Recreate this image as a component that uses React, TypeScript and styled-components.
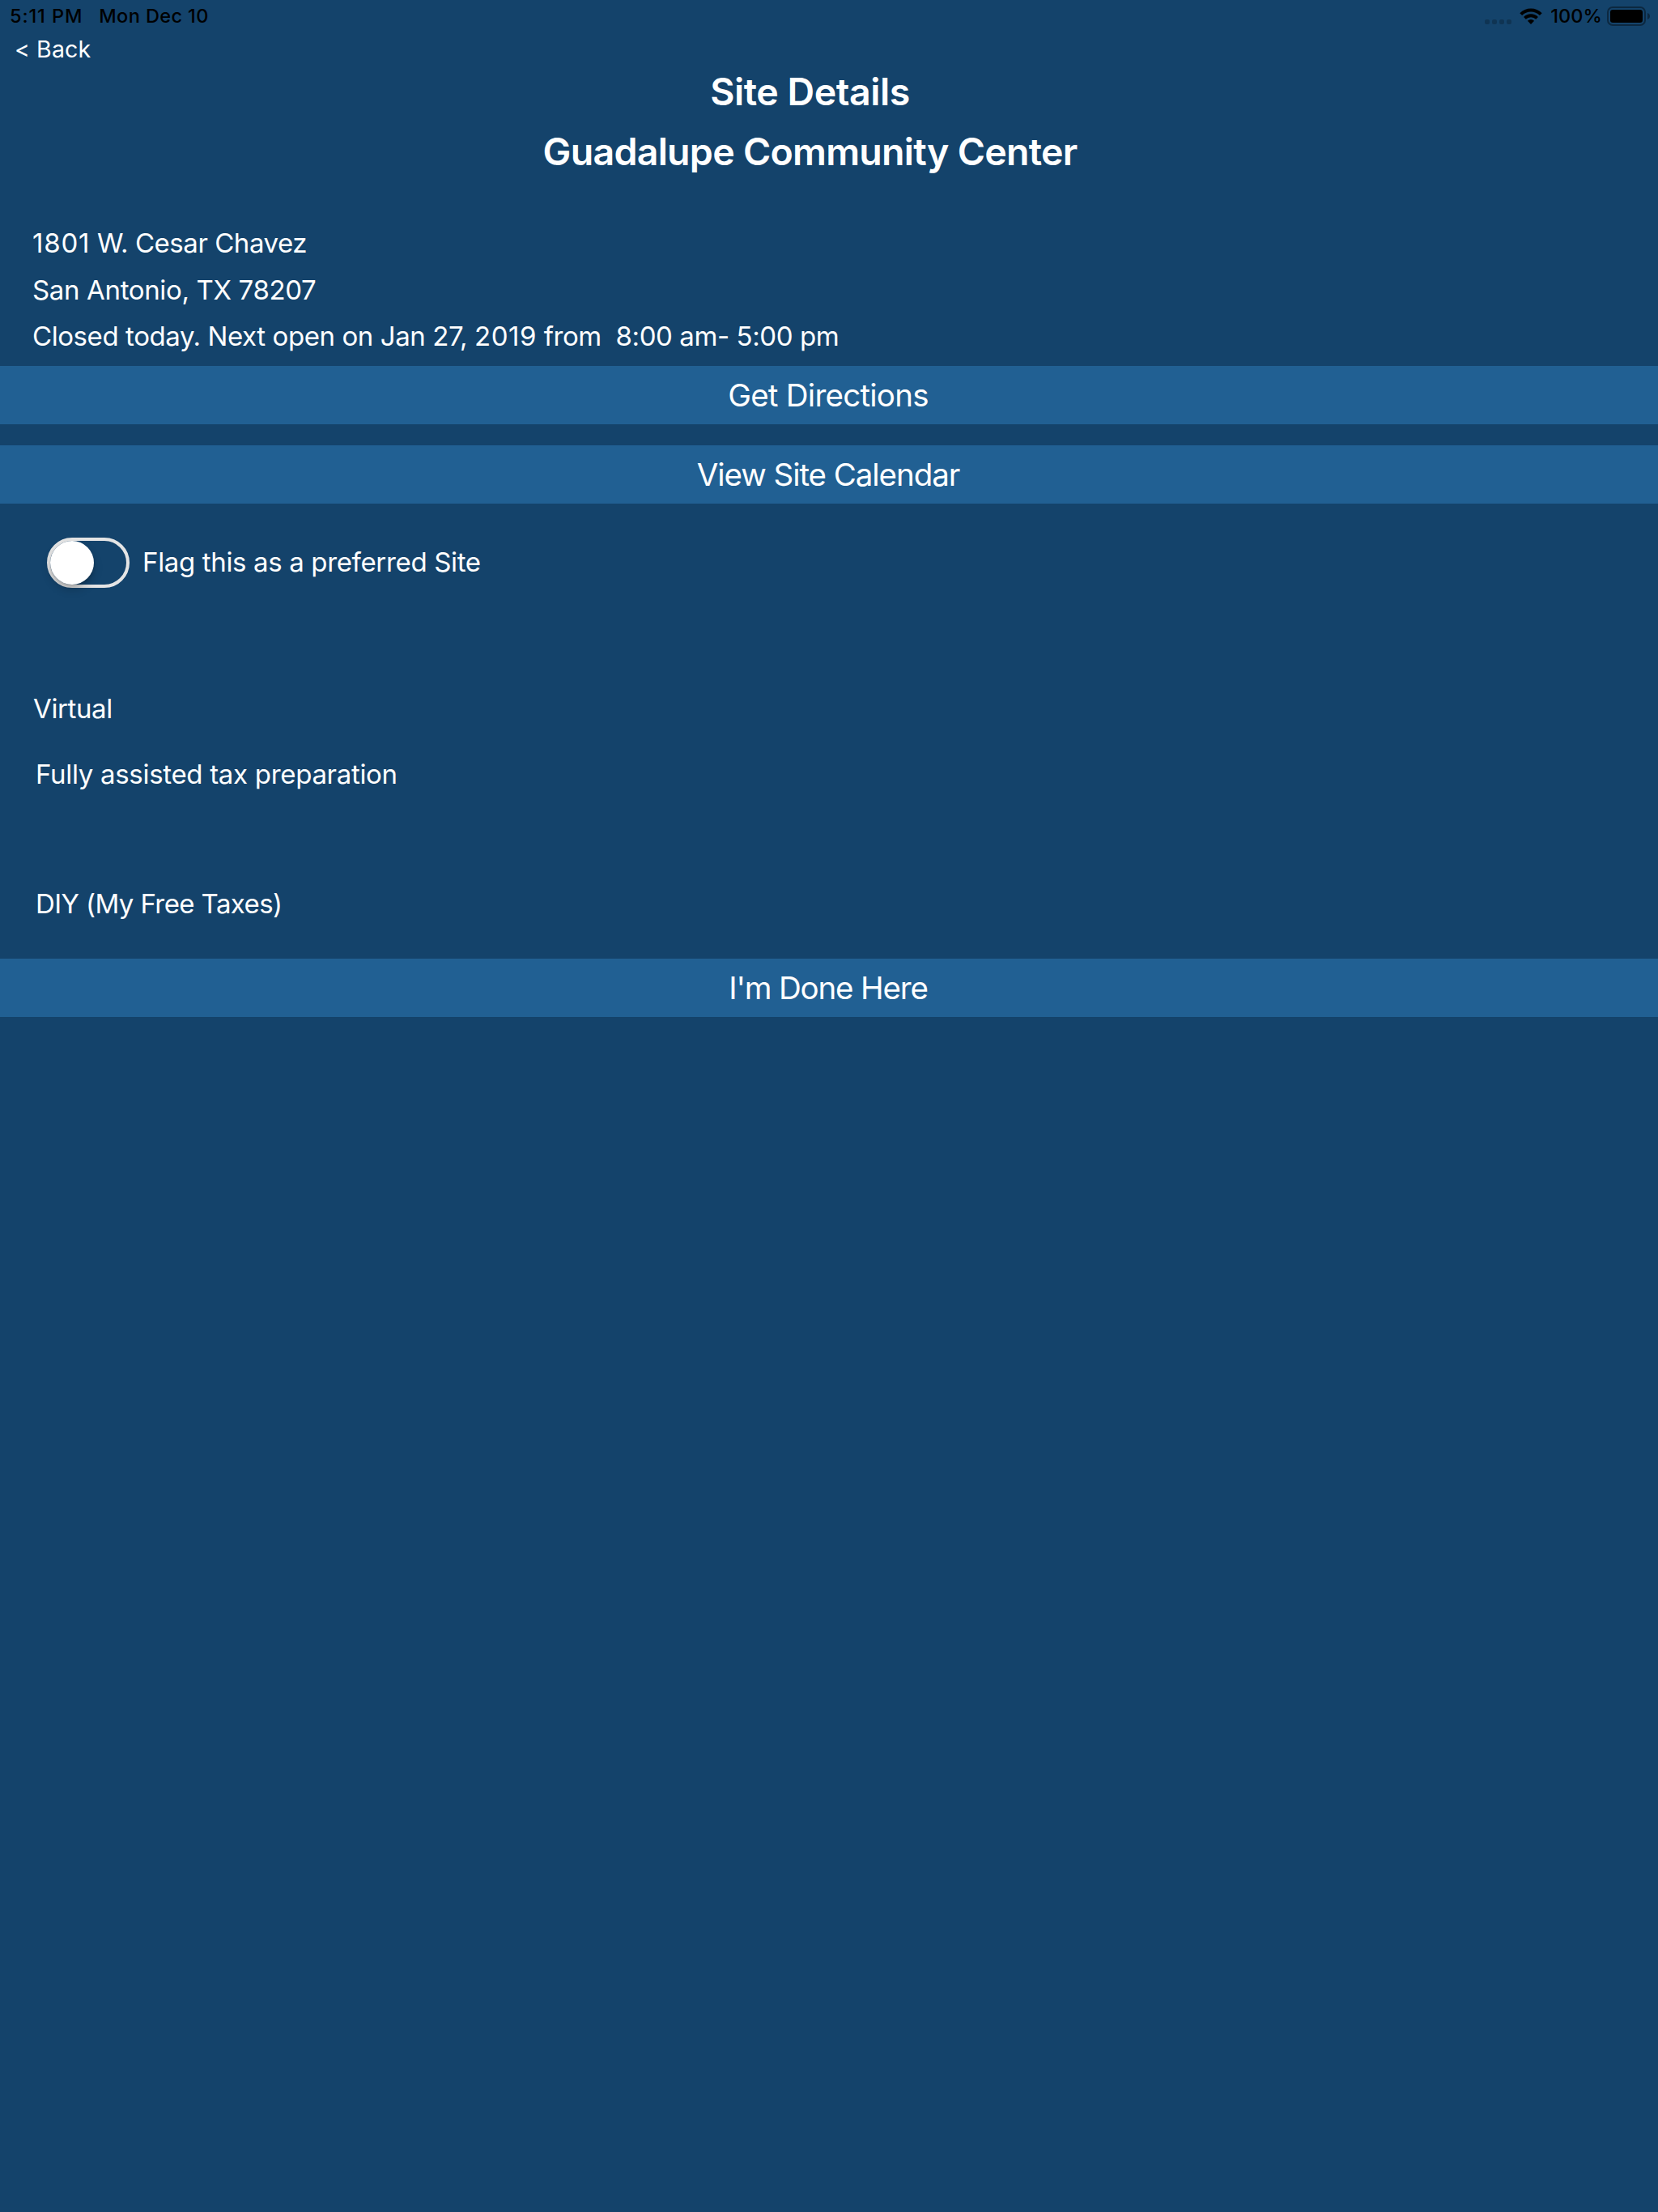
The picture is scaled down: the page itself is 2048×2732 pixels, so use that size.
import React from "react";
import styled, { createGlobalStyle } from "styled-components";

const GlobalStyle = createGlobalStyle`
  body {
    margin: 0;
    background: #14436b;
  }
`;

const Screen = styled.main`
  display: flex;
  flex-direction: column;
  box-sizing: border-box;
  width: 100%;
  min-height: 2732px;
  background: #14436b;
  color: #fff;
  font-family: Inter, "Liberation Sans", sans-serif;
  font-size: 33px;
  white-space: pre;
`;

const StatusBar = styled.header`
  display: flex;
  justify-content: space-between;
  height: 39px;
  padding: 0 10px 0 12px;
  color: #000;
  font-size: 23.5px;
  font-weight: 500;
  line-height: 39px;
`;

const StatusGroup = styled.div<{ $gap?: number }>`
  display: flex;
  gap: ${({ $gap = 0 }) => $gap}px;
`;

const Tracked = styled.span<{ $tracking: number }>`
  letter-spacing: ${({ $tracking }) => $tracking}px;
`;

const SignalDots = styled.div`
  display: flex;
  gap: 3px;
  margin: 24px 10px 0 0;
`;

const SignalDot = styled.i`
  width: 6px;
  height: 6px;
  border-radius: 2px;
  background: rgba(0, 0, 0, 0.22);
`;

const WifiIcon = styled.svg`
  width: 28px;
  height: 20px;
  margin: 10px 10px 0 0;
`;

const BatteryIcon = styled.svg`
  width: 53px;
  height: 24px;
  margin: 8px 0 0 6px;
`;

const BackButton = styled.button`
  align-self: flex-start;
  height: 44px;
  padding: 0 0 0 18px;
  border: 0;
  background: none;
  color: inherit;
  font: 400 28.5px/44px Inter, "Liberation Sans", sans-serif;
  letter-spacing: 0.12px;
`;

const Titles = styled.div`
  display: flex;
  flex-direction: column;
  align-items: center;
  margin-top: -7px;
  padding-right: 47px;
`;

const Title = styled.h1<{ $tracking: number }>`
  margin: 0;
  font-size: 46.5px;
  font-weight: 600;
  line-height: 74px;
  letter-spacing: ${({ $tracking }) => $tracking}px;
`;

const Address = styled.address`
  display: flex;
  flex-direction: column;
  height: 173px;
  margin: 47px 0 8px;
  padding-left: 40px;
  font-style: normal;
`;

const Line = styled.div<{ $tracking: number; $height?: number }>`
  line-height: ${({ $height = 58 }) => $height}px;
  letter-spacing: ${({ $tracking }) => $tracking}px;
`;

const ActionButton = styled.button<{ $tracking: number; $spaceAfter?: number }>`
  width: 100%;
  height: 72px;
  margin: 0 0 ${({ $spaceAfter = 0 }) => $spaceAfter}px;
  padding: 0 2px 0 0;
  border: 0;
  background: #216093;
  color: inherit;
  font: 400 38.5px/72px Inter, "Liberation Sans", sans-serif;
  letter-spacing: ${({ $tracking }) => $tracking}px;
`;

const PreferredRow = styled.label`
  display: flex;
  align-items: center;
  height: 62px;
  margin: 42px 0 120px;
  padding-left: 58px;
  gap: 16px;
`;

const Switch = styled.span`
  display: flex;
  box-sizing: border-box;
  width: 102px;
  height: 62px;
  border: 4px solid #e5e5e5;
  border-radius: 31px;
`;

const Knob = styled.span`
  width: 54px;
  height: 54px;
  border-radius: 50%;
  background: #fff;
  box-shadow: 0 6px 12px rgba(0, 0, 0, 0.2), 0 3px 3px rgba(0, 0, 0, 0.12);
`;

const PreferredLabel = styled.span`
  padding-bottom: 2px;
  line-height: 58px;
  letter-spacing: -0.35px;
`;

const Services = styled.section`
  display: flex;
  flex-direction: column;
  height: 338px;
`;

const Service = styled.div<{ $tracking: number; $indent: number; $spaceAfter?: number }>`
  margin-bottom: ${({ $spaceAfter = 0 }) => $spaceAfter}px;
  padding-left: ${({ $indent }) => $indent}px;
  line-height: 58px;
  letter-spacing: ${({ $tracking }) => $tracking}px;
`;

export default function App() {
  return (
    <>
      <GlobalStyle />
      <Screen>
        <StatusBar>
          <StatusGroup $gap={20}>
            <Tracked $tracking={0.9}>5:11 PM</Tracked>
            <Tracked $tracking={0.4}>Mon Dec 10</Tracked>
          </StatusGroup>
          <StatusGroup>
            <SignalDots>
              <SignalDot />
              <SignalDot />
              <SignalDot />
              <SignalDot />
            </SignalDots>
            <WifiIcon viewBox="0 0 28 20" aria-label="Wi-Fi">
              <path d="M1.7 7.6a17.4 17.4 0 0 1 24.6 0" fill="none" stroke="#000" strokeWidth="4" />
              <path d="M6.4 12.4a10.8 10.8 0 0 1 15.2 0" fill="none" stroke="#000" strokeWidth="3.8" />
              <path d="M14 20l-4.1-4.2a5.8 5.8 0 0 1 8.2 0z" />
            </WifiIcon>
            <Tracked $tracking={0.1}>100%</Tracked>
            <BatteryIcon viewBox="0 0 53 24" aria-label="Battery full">
              <rect x="1" y="1" width="46" height="22" rx="6" fill="none" stroke="#000" strokeOpacity="0.4" strokeWidth="2" />
              <rect x="4" y="4" width="40" height="16" rx="3.2" />
              <path d="M50 8c4 1.2 4 6.8 0 8z" fillOpacity="0.4" />
            </BatteryIcon>
          </StatusGroup>
        </StatusBar>
        <BackButton>&lt; Back</BackButton>
        <Titles>
          <Title $tracking={-0.45}>Site Details</Title>
          <Title as="h2" $tracking={-0.72}>Guadalupe Community Center</Title>
        </Titles>
        <Address>
          <Line $tracking={-0.45}>
            <Tracked $tracking={0.8}>1801</Tracked> W. Cesar Chavez
          </Line>
          <Line $tracking={-0.35}>San Antonio, TX 78207</Line>
          <Line $tracking={-0.42} $height={57}>
            {"Closed today. Next open on Jan 27, "}
            <Tracked $tracking={0.5}>2019</Tracked>
            {" from  8:00 am- 5:00 pm"}
          </Line>
        </Address>
        <ActionButton $tracking={-0.75} $spaceAfter={26}>Get Directions</ActionButton>
        <ActionButton $tracking={-1.06}>View Site Calendar</ActionButton>
        <PreferredRow>
          <Switch role="switch" aria-checked={false}>
            <Knob />
          </Switch>
          <PreferredLabel>Flag this as a preferred Site</PreferredLabel>
        </PreferredRow>
        <Services>
          <Service $tracking={-0.38} $indent={41} $spaceAfter={23}>Virtual</Service>
          <Service $tracking={-0.308} $indent={44} $spaceAfter={102}>Fully assisted tax preparation</Service>
          <Service $tracking={-0.594} $indent={44}>DIY (My Free Taxes)</Service>
        </Services>
        <ActionButton $tracking={-1.17}>I'm Done Here</ActionButton>
      </Screen>
    </>
  );
}
